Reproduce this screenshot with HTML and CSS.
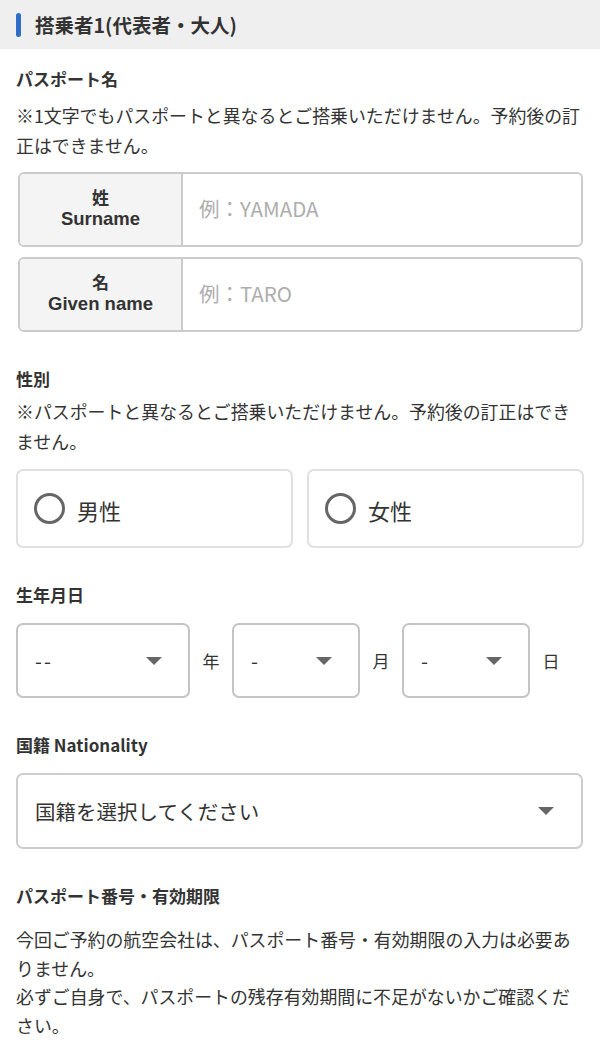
FILE: index.html
```html
<!DOCTYPE html>
<html lang="ja">
<head>
<meta charset="utf-8">
<title>搭乗者情報</title>
<link rel="stylesheet" href="styles.css">
</head>
<body>
<header class="head">
  <span class="head-bar"></span>
  <h1 class="head-title">搭乗者1(代表者・大人)</h1>
</header>
<main class="form">
  <h2 class="label label-first">パスポート名</h2>
  <p class="note note-first">※1文字でもパスポートと異なるとご搭乗いただけません。予約後の訂正はできません。</p>

  <div class="name-box name-box-first">
    <div class="name-head"><span class="name-jp">姓</span><span class="name-en">Surname</span></div>
    <div class="name-input">例：YAMADA</div>
  </div>
  <div class="name-box name-box-second">
    <div class="name-head"><span class="name-jp">名</span><span class="name-en">Given name</span></div>
    <div class="name-input">例：TARO</div>
  </div>

  <h2 class="label label-gap">性別</h2>
  <p class="note note-second">※パスポートと異なるとご搭乗いただけません。予約後の訂正はできません。</p>

  <div class="radios">
    <div class="radio"><span class="radio-dot"></span><span class="radio-text">男性</span></div>
    <div class="radio"><span class="radio-dot"></span><span class="radio-text">女性</span></div>
  </div>

  <h2 class="label label-gap">生年月日</h2>
  <div class="dob">
    <div class="select"><span class="dash">--</span><span class="caret"></span></div>
    <span class="unit">年</span>
    <div class="select"><span>-</span><span class="caret"></span></div>
    <span class="unit">月</span>
    <div class="select"><span>-</span><span class="caret"></span></div>
    <span class="unit">日</span>
  </div>

  <h2 class="label label-gap">国籍 Nationality</h2>
  <div class="select select-wide"><span>国籍を選択してください</span><span class="caret"></span></div>

  <h2 class="label label-gap">パスポート番号・有効期限</h2>
  <p class="para">今回ご予約の航空会社は、パスポート番号・有効期限の入力は必要ありません。<br>必ずご自身で、パスポートの残存有効期間に不足がないかご確認ください。</p>
</main>
</body>
</html>
```

FILE: styles.css
```css
* { box-sizing: border-box; }
html, body { margin: 0; padding: 0; background: #fff; }
body {
  font-family: "Noto Sans CJK JP", "Noto Sans", sans-serif;
  color: #333;
  width: 600px;
}
.head {
  height: 49px;
  background: #efefef;
  display: flex;
  align-items: center;
  padding-left: 16px;
}
.head-bar {
  width: 5px;
  height: 24px;
  border-radius: 3px;
  background: #2f6cc5;
  margin-top: 1px;
}
.head-title {
  margin: 0 0 0 14px;
  font-size: 19.5px;
  font-weight: 700;
  line-height: 26px;
  color: #333;
}
.form { padding: 0 16px; }
.label {
  margin: 0;
  font-size: 17px;
  font-weight: 700;
  line-height: 26px;
  color: #333;
}
.label-first { margin-top: 17px; }
.label-gap { margin-top: 34px; }
.note, .para {
  margin: 0;
  font-size: 17.9px;
  line-height: 30px;
  color: #333;
}
.note-first { margin-top: 8px; }
.note-second { margin-top: 5px; line-height: 29.5px; }
.para { margin-top: 16px; line-height: 28.7px; }

.name-box {
  margin: 0 1px 0 2px;
  height: 75px;
  border: 2px solid #cbcbcb;
  border-radius: 6px;
  display: flex;
  overflow: hidden;
}
.name-box-first { margin-top: 12px; }
.name-box-second { margin-top: 10px; }
.name-head {
  width: 163px;
  flex: none;
  background: #f4f4f4;
  border-right: 2px solid #cbcbcb;
  display: flex;
  flex-direction: column;
  align-items: center;
  justify-content: center;
  font-weight: 700;
  color: #333;
  padding-bottom: 2px;
}
.name-jp {
  display: block;
  font-size: 17px;
  line-height: 20px;
}
.name-en {
  display: block;
  font-family: "Liberation Sans", Arial, sans-serif;
  font-size: 18.5px;
  line-height: 24px;
}
.name-input {
  flex: 1;
  display: flex;
  align-items: center;
  padding-left: 16px;
  font-size: 20.5px;
  color: #adadad;
  padding-bottom: 4px;
}

.radios {
  margin-top: 13px;
  display: grid;
  grid-template-columns: 1fr 1fr;
  gap: 14px;
}
.radio {
  height: 79px;
  border: 2px solid #e0e0e0;
  border-radius: 7px;
  display: flex;
  align-items: center;
  padding-left: 16px;
}
.radio-dot {
  width: 31px;
  height: 31px;
  border: 3.5px solid #666;
  border-radius: 50%;
  flex: none;
}
.radio-text {
  margin-left: 12px;
  font-size: 22px;
  color: #333;
  line-height: 30px;
  padding-top: 2px;
}

.dob {
  margin-top: 15px;
  display: grid;
  grid-template-columns: 174px 42px 128px 42px 128px 42px;
  align-items: center;
}
.unit {
  text-align: center;
  font-size: 17px;
  color: #333;
}
.select {
  height: 75px;
  border: 2px solid #c4c4c4;
  border-radius: 7px;
  display: flex;
  align-items: center;
  justify-content: space-between;
  padding: 0 26px 0 17px;
  font-size: 20px;
  color: #333;
}
.dash { letter-spacing: 2px; }
.select-wide {
  margin-top: 15px;
  height: 76px;
  margin-right: 1px;
  border-color: #cdcdcd;
  font-size: 20.5px;
  padding-right: 27px;
}
.caret {
  width: 0;
  height: 0;
  border-left: 8px solid transparent;
  border-right: 8px solid transparent;
  border-top: 8px solid #666;
  flex: none;
}
```
